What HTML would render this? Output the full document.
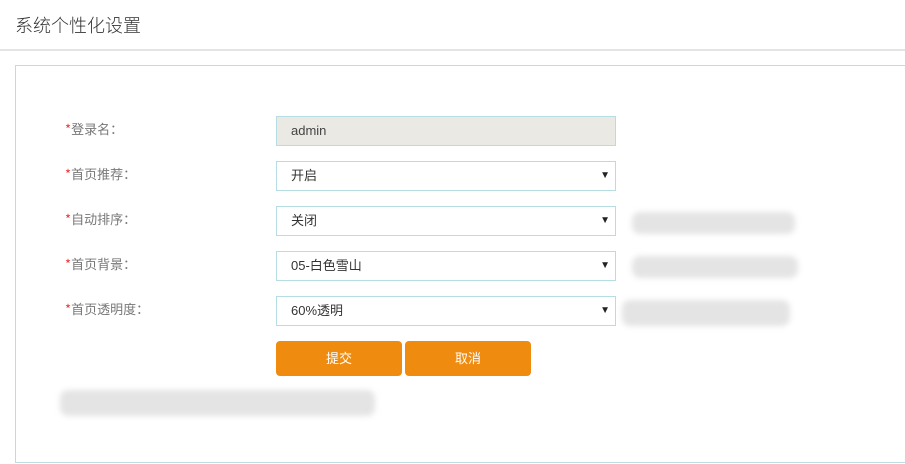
<!DOCTYPE html>
<html><head><meta charset="utf-8"><style>
body{margin:0;width:905px;height:464px;background:#fff;font-family:"Liberation Sans","Noto Sans CJK SC",sans-serif;position:relative;overflow:hidden}
.hd{position:absolute;left:0;top:0;width:905px;height:49px;border-bottom:2px solid #e4e4e4}
.hd span{position:absolute;left:15px;top:13px;font-size:18px;color:#333;font-family:"Noto Sans CJK SC",sans-serif;font-weight:300;line-height:24px}
.panel{position:absolute;left:15px;top:65px;width:900px;height:398px;border:1px solid #bddde4;box-sizing:border-box}
.lb{position:absolute;left:65px;font-size:13px;color:#777;font-family:"Noto Sans CJK SC",sans-serif;line-height:18px}
.lb i{color:#e4393c;font-style:normal}
.in{position:absolute;left:276px;width:340px;height:30px;border:1px solid #b6dce4;box-sizing:border-box;font-size:13px;color:#333;padding:0 0 0 14px;line-height:28px}
.in b{position:absolute;right:5px;top:0;font-size:10px;font-weight:normal;color:#222;line-height:28px}
.btn{position:absolute;top:341px;width:126px;height:35px;background:#ef8c10;border-radius:4px;color:#fff;font-size:13px;text-align:center;line-height:35px}
.bl{position:absolute;background:#e4e4e4;filter:blur(3px);border-radius:8px}
</style></head><body>
<div class="hd"><span>系统个性化设置</span></div>
<div class="panel"></div>
<div class="lb" style="top:120px"><i>*</i>登录名：</div>
<div class="lb" style="top:165px"><i>*</i>首页推荐：</div>
<div class="lb" style="top:210px"><i>*</i>自动排序：</div>
<div class="lb" style="top:255px"><i>*</i>首页背景：</div>
<div class="lb" style="top:300px"><i>*</i>首页透明度：</div>
<div class="in" style="top:116px;background:#ebe9e3;color:#444">admin</div>
<div class="in" style="top:161px">开启<b>▼</b></div>
<div class="in" style="top:206px">关闭<b>▼</b></div>
<div class="in" style="top:251px">05-白色雪山<b>▼</b></div>
<div class="in" style="top:296px">60%透明<b>▼</b></div>
<div class="btn" style="left:276px">提交</div>
<div class="btn" style="left:405px">取消</div>
<div class="bl" style="left:632px;top:212px;width:163px;height:22px"></div>
<div class="bl" style="left:632px;top:256px;width:166px;height:22px"></div>
<div class="bl" style="left:622px;top:300px;width:168px;height:26px"></div>
<div class="bl" style="left:60px;top:390px;width:315px;height:26px"></div>
</body></html>
